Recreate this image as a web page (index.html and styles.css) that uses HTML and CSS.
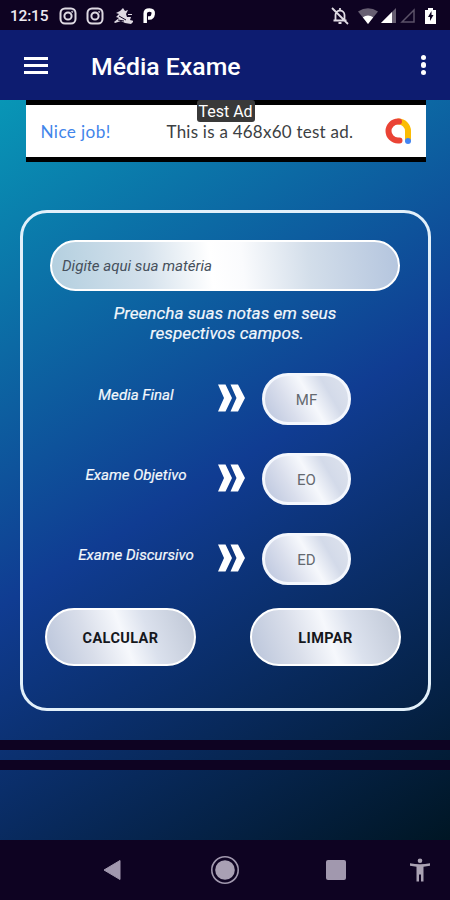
FILE: index.html
```html
<!DOCTYPE html>
<html lang="pt-BR">
<head>
<meta charset="utf-8">
<title>Média Exame</title>
<link rel="stylesheet" href="styles.css">
</head>
<body>
<header class="status">
  <span class="clock">12:15</span>
  <svg class="insta" width="18" height="18" viewBox="0 0 18 18" fill="none" stroke="#ded9e2" stroke-width="2"><rect x="1.5" y="1.5" width="15" height="15" rx="4.5"/><circle cx="9" cy="9" r="3.6"/><circle cx="13.2" cy="4.8" r=".6" stroke-width="1"/></svg>
  <svg class="insta" width="18" height="18" viewBox="0 0 18 18" fill="none" stroke="#ded9e2" stroke-width="2"><rect x="1.5" y="1.5" width="15" height="15" rx="4.5"/><circle cx="9" cy="9" r="3.6"/><circle cx="13.2" cy="4.8" r=".6" stroke-width="1"/></svg>
  <svg class="bird" width="20" height="18" viewBox="0 0 20 18" fill="#ded9e2"><path d="M10 1 7 4 3 6l3 1-3 3 3 1-5 4 1 1 6-2 4 2 6 1 3-3-4-1 1-3-4 0-1-3 2-4-3 1z"/><path d="m6 9 7 4M5 13l6 1" stroke="#0e0322"/><path d="M15 7.500h4" stroke="#ded9e2" stroke-width="1"/></svg>
  <svg width="13" height="16" viewBox="0 0 13 16"><path d="M2.200 15V5.500Q2.200 2 6.500 2T10.200 6 6.500 10H5" fill="none" stroke="#fff" stroke-width="3.500"/></svg>
  <span class="spacer"></span>
  <svg class="bell" width="18" height="18" viewBox="0 0 18 18" fill="none" stroke="#e0dce4" stroke-width="1.800"><path d="M4.500 13.500V8a4.500 4.500 0 0 1 9 0v5.500M2.500 13.500h13M9 1v3M7.500 16h3M1 1l16 16"/></svg>
  <svg class="wifi" width="20" height="16" viewBox="0 0 20 16"><path d="M0 3.500Q10-3 20 3.500L10 16z" fill="#675f72"/><path d="M4.800 9.300Q10 5.500 15.200 9.300L10 16z" fill="#fff"/></svg>
  <svg class="sig" width="15" height="15" viewBox="0 0 15 15"><path d="M0 15 15 0v15z" fill="#675f72"/><path d="M0 15 11 4v11z" fill="#fff"/></svg>
  <svg class="sig2" width="15" height="15" viewBox="0 0 15 15"><path d="M2 14 14 2v12z" fill="none" stroke="#5b5268" stroke-width="1.500"/></svg>
  <svg width="11" height="16" viewBox="0 0 11 16"><path d="M3 2V0h5v2h3v14H0V2z" fill="#fff"/><path d="M6.500 3 3 9h2v4l3.500-6h-2z" fill="#0e0322"/></svg>
</header>
<nav class="appbar">
  <div class="menu"><i></i><i></i><i></i></div>
  <h1>Média Exame</h1>
  <div class="more"><i></i><i></i><i></i></div>
</nav>
<main>
  <div class="ad">
    <span class="nice">Nice job!</span>
    <span class="msg">This is a 468x60 test ad.</span>
    <svg class="admob" width="28" height="28" viewBox="0 0 28 28" fill="none" stroke-width="6" stroke-linecap="round"><path d="M14.500 4.500a9.500 9.500 0 0 1 9.500 9.500v8.500" stroke="#fbbc04"/><path d="M15 4.500h-1a9.500 9.500 0 0 0 0 19h1.500" stroke="#ea4335"/><circle cx="24" cy="24" r="3" fill="#4285f4"/></svg>
    <span class="tag">Test Ad</span>
  </div>
  <section class="panel">
    <div class="pill subject">Digite aqui sua matéria</div>
    <p class="hint">Preencha suas notas em seus<br><span class="second">respectivos campos.</span></p>
    <div class="row">
      <span class="label">Media Final</span>
      <svg class="arrows" width="27" height="28" viewBox="0 0 27 28" fill="#fff"><path d="M0 .5h7.500L14 14 7.500 27.500H0L6 14zM12.500 .5H20L27 14l-7 13.500h-7.500L18.500 14z"/></svg>
      <div class="pill grade">MF</div>
    </div>
    <div class="row">
      <span class="label">Exame Objetivo</span>
      <svg class="arrows" width="27" height="28" viewBox="0 0 27 28" fill="#fff"><path d="M0 .5h7.500L14 14 7.500 27.500H0L6 14zM12.500 .5H20L27 14l-7 13.500h-7.500L18.500 14z"/></svg>
      <div class="pill grade">EO</div>
    </div>
    <div class="row">
      <span class="label">Exame Discursivo</span>
      <svg class="arrows" width="27" height="28" viewBox="0 0 27 28" fill="#fff"><path d="M0 .5h7.500L14 14 7.500 27.500H0L6 14zM12.500 .5H20L27 14l-7 13.500h-7.500L18.500 14z"/></svg>
      <div class="pill grade">ED</div>
    </div>
    <div class="actions">
      <button class="pill">CALCULAR</button>
      <button class="pill">LIMPAR</button>
    </div>
  </section>
  <div class="stripes"></div>
</main>
<footer class="navbar">
  <svg width="18" height="22" viewBox="0 0 18 22"><path d="M1 11 17 1.500v19z" fill="#a198ae" stroke="#a198ae" stroke-linejoin="round"/></svg>
  <svg width="30" height="30" viewBox="0 0 30 30"><circle cx="15" cy="15" r="13.200" fill="none" stroke="#a198ae" stroke-width="1.600"/><circle cx="15" cy="15" r="9.800" fill="#a9a0b4"/></svg>
  <svg width="20" height="20" viewBox="0 0 20 20"><rect width="20" height="20" rx="2" fill="#a198ae"/></svg>
  <svg width="20" height="24" viewBox="0 0 20 24" fill="#aaa2b3"><circle cx="10" cy="2.800" r="2.300"/><path d="M0 5.200Q10 7.400 20 5.200V7.800L13.500 8.800V23.500H11V16.500H9V23.500H6.500V8.800L0 7.800z"/></svg>
</footer>
</body>
</html>
```
FILE: styles.css
```css
* { box-sizing: border-box; }
body {
  margin: 0;
  width: 450px;
  height: 900px;
  display: flex;
  flex-direction: column;
  overflow: hidden;
  font-family: Roboto, "Liberation Sans", sans-serif;
}
svg { display: block; flex: none; }
i { display: block; background: #fff; }

.status {
  height: 30px;
  background: #0e0322;
  display: flex;
  align-items: center;
  padding: 1px 14px 0 10px;
}
.clock { color: #eeeaf0; font-size: 15.500px; font-weight: 500; width: 49px; letter-spacing: -.2px; }
.insta { margin-right: 9px; }
.bird { margin-right: 10px; }
.spacer { flex: 1; }
.bell { margin-right: 9px; }
.wifi { margin-right: 3px; }
.sig { margin-right: 4px; }
.sig2 { margin-right: 10px; }

.appbar {
  height: 70px;
  background: #0d1c70;
  display: flex;
  align-items: center;
  padding: 0 24px;
}
.menu { width: 67px; display: grid; gap: 4px; }
.menu i { width: 24px; height: 3px; }
.appbar h1 { flex: 1; margin: 3px 0 0; color: #fff; font-size: 24.800px; font-weight: 500; line-height: 30px; }
.more { display: grid; gap: 2px; }
.more i { width: 5.500px; height: 5.500px; border-radius: 50%; }

main {
  height: 740px;
  background: linear-gradient(148.700deg, #0896b6 0%, #103c92 50%, #001624 100%);
}
.ad {
  position: relative;
  width: 400px;
  height: 62px;
  margin-left: 25.500px;
  background: #fff;
  border: solid #000;
  border-width: 5px 0;
  display: flex;
  align-items: center;
  padding: 0 14px 0 15px;
  font-family: Lato, Roboto, sans-serif;
}
.nice { width: 126px; color: #4285ea; font-size: 17.200px; letter-spacing: .38px; }
.msg { flex: 1; color: #3c3f43; font-size: 17px; letter-spacing: .24px; white-space: nowrap; }
.tag {
  position: absolute;
  left: 171px;
  top: -5px;
  width: 58px;
  height: 22px;
  background: #393939;
  border-radius: 3px;
  color: #fff;
  font: 16px/24px Roboto, sans-serif;
  text-align: center;
  white-space: nowrap;
}

.panel {
  width: 411px;
  height: 501px;
  margin: 48px 0 0 20px;
  border: 3px solid #e2f0fa;
  border-radius: 27px;
  padding: 27px 27px 0 22px;
}
.pill {
  display: flex;
  align-items: center;
  justify-content: center;
  border: 2px solid #fff;
  border-radius: 26px;
  background: linear-gradient(70deg, #b9c4da 0%, #d9deea 30%, #f6f8fc 52%, #dbe1ed 68%, #bec6d5 100%);
}
.subject {
  height: 51px;
  margin: 0 1px 0 5px;
  justify-content: flex-start;
  padding: 1px 0 0 10px;
  background: linear-gradient(84deg, #b3cfdf 0%, #d4e1ec 27%, #fff 46%, #fafbfd 55%, #d3deea 74%, #b4c5de 100%);
  color: #46505c;
  font-size: 15.100px;
  font-style: italic;
}
.hint {
  margin: 12px 1px 0 5px;
  height: 70px;
  color: #f2f7fc;
  font-size: 17.200px;
  line-height: 20px;
  font-style: italic;
  text-align: center;
  white-space: nowrap;
  -webkit-text-stroke: .2px #f2f7fc;
}
.second { padding-left: 4px; }
.row { display: flex; height: 80px; align-items: flex-start; }
.label {
  width: 173px;
  padding: 12px 0 0 9px;
  color: #f4f8fc;
  font-size: 15.100px;
  line-height: 20px;
  font-style: italic;
  text-align: center;
  white-space: nowrap;
  -webkit-text-stroke: .2px #f4f8fc;
}
.arrows { margin-top: 11px; }
.grade {
  width: 89px;
  height: 52px;
  margin-left: 17px;
  padding-top: 1px;
  border-width: 3px;
  border-color: #f4f7fd;
  background: linear-gradient(60deg, #b9c4dd 0%, #d9deec 30%, #f6f8fc 54%, #d3dae9 74%, #dfe4ee 100%);
  color: #646970;
  font-size: 15px;
}
.actions { display: flex; justify-content: space-between; margin-top: -5px; }
.actions .pill {
  width: 151px;
  height: 58px;
  border-radius: 29px;
  padding: 2px 0 0;
  color: #15171c;
  font: 700 14.500px Roboto, sans-serif;
  letter-spacing: .4px;
}
.stripes { height: 30px; margin-top: 29px; border: solid #0e0322; border-width: 10px 0; }

.navbar {
  height: 60px;
  background: #0e0322;
  display: grid;
  grid-template-columns: 168px 113px 110px 59px;
  align-items: center;
  justify-items: center;
}
.navbar svg:first-child { margin-left: 56px; }
.navbar svg:last-child { margin-right: 1px; }
```
